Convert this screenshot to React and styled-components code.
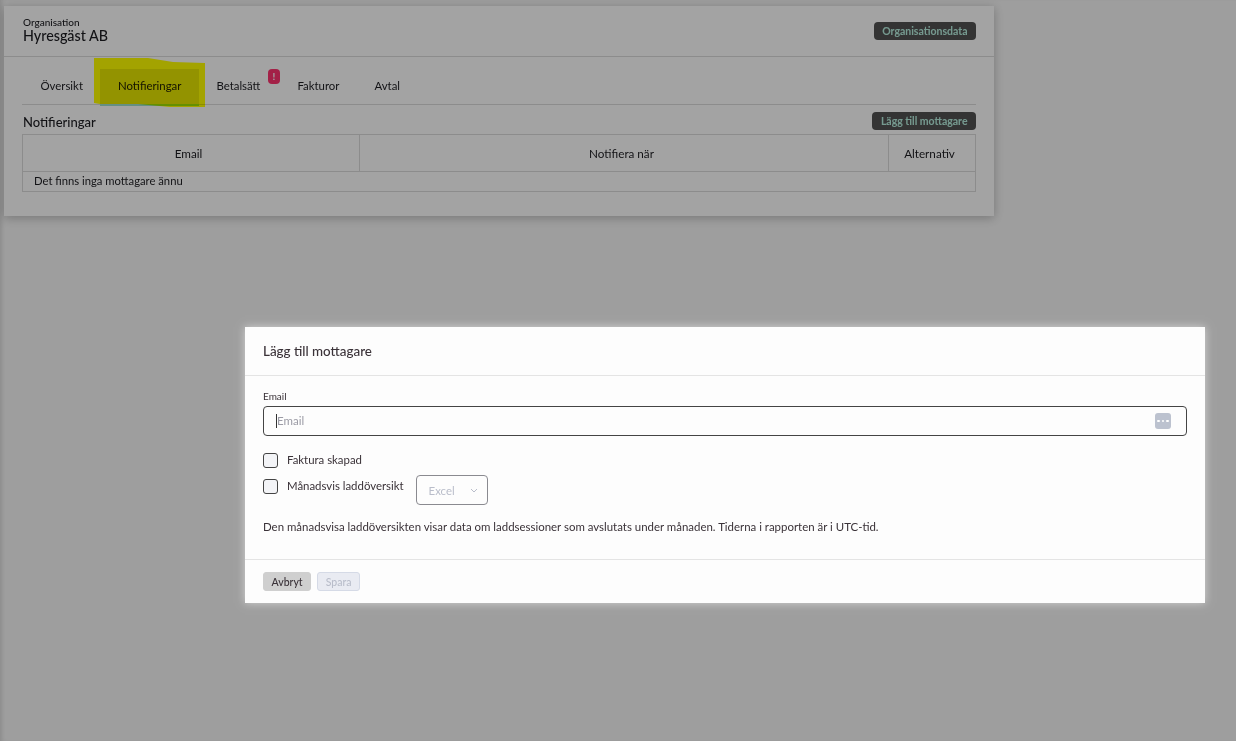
import React from "react";
import styled, { createGlobalStyle } from "styled-components";

const GlobalStyle = createGlobalStyle`
  html, body {
    margin: 0;
    height: 100%;
    background: #f8f8f8;
    font-family: "Lato", "Noto Sans", sans-serif;
    color: #1d1d22;
    overflow: hidden;
  }
`;

const Page = styled.div`
  height: 741px;
  padding: 6px 0 0 4px;
  box-sizing: border-box;
  box-shadow: inset 4px 0 4px -2px rgba(0, 0, 0, 0.12);
`;

const Card = styled.section`
  width: 990px;
  height: 210px;
  background: #fff;
  box-shadow: 0 2px 10px rgba(0, 0, 0, 0.25);
`;

const CardHeader = styled.header`
  height: 50px;
  padding: 0 18px;
  display: flex;
  align-items: center;
  justify-content: space-between;
  border-bottom: 1px solid #dcdcdc;
`;

const OrgName = styled.div`
  margin: -3px 0 0 1px;
  font-size: 14.3px;
  font-weight: 500;
  line-height: 15px;
  small {
    display: block;
    font-size: 10px;
    line-height: 11px;
  }
`;

const DarkButton = styled.button`
  height: 18px;
  padding: 0 8.5px;
  border: 0;
  border-radius: 4px;
  background: #525252;
  color: #b8f0e0;
  font: 700 10.5px "Lato", sans-serif;
`;

const Body = styled.div`
  padding: 0 18px;
`;

const Tabs = styled.nav`
  height: 48px;
  padding-left: 1px;
  box-sizing: border-box;
  display: flex;
  align-items: flex-end;
  border-bottom: 1px solid #dcdcdc;
`;

const Tab = styled.a`
  position: relative;
  height: 37px;
  padding: 0 ${(p) => (p.$badged ? "19.5px" : "17.5px")} 2px 17.5px;
  box-sizing: border-box;
  display: flex;
  align-items: center;
  font-size: 11.4px;
  background: ${(p) => (p.$active ? "#e6e6e6" : "transparent")};
  border-bottom: 2px solid ${(p) => (p.$active ? "#9fe0cc" : "transparent")};
  margin-bottom: -2px;
`;

const Alert = styled.span`
  position: absolute;
  top: 0;
  right: 0;
  width: 12px;
  height: 15px;
  border-radius: 4px;
  background: #ff3470;
  color: #fff;
  font-size: 10px;
  font-weight: 700;
  line-height: 15px;
  text-align: center;
`;

const TitleRow = styled.div`
  height: 29px;
  box-sizing: border-box;
  padding-top: 3px;
  display: flex;
  align-items: center;
  justify-content: space-between;
`;

const SectionTitle = styled.h3`
  margin: 2px 0 0 1px;
  font-size: 13px;
  font-weight: 500;
`;

const Table = styled.div`
  border: 1px solid #dcdcdc;
  font-size: 11.7px;
`;

const HeadRow = styled.div`
  height: 37px;
  box-sizing: border-box;
  display: grid;
  grid-template-columns: 336px 529px 1fr;
  border-bottom: 1px solid #dcdcdc;
`;

const HeadCell = styled.div`
  display: flex;
  align-items: center;
  justify-content: center;
  padding-right: 5px;
  & + & {
    border-left: 1px solid #dcdcdc;
  }
`;

const EmptyRow = styled.div`
  height: 19px;
  line-height: 18px;
  padding-left: 11px;
  font-size: 11.25px;
`;

const Highlight = styled.svg`
  position: absolute;
  left: 0;
  top: 0;
  mix-blend-mode: multiply;
`;

const Backdrop = styled.div`
  position: fixed;
  inset: 0;
  background: rgba(0, 0, 0, 0.36);
  display: flex;
  align-items: flex-start;
  padding: 327px 0 0 245px;
  box-sizing: border-box;
`;

const Modal = styled.div`
  width: 960px;
  height: 276px;
  background: #fdfdfd;
  box-shadow: 0 0 8px rgba(255, 255, 255, 0.55);
  display: flex;
  flex-direction: column;
`;

const ModalHeader = styled.h2`
  margin: 0;
  height: 49px;
  box-sizing: border-box;
  padding: 0 18px;
  display: flex;
  align-items: center;
  font-size: 13.4px;
  font-weight: 500;
  color: #3a3238;
  border-bottom: 1px solid #e4e4e4;
`;

const ModalBody = styled.div`
  flex: 1;
  padding: 14px 18px 0;
  color: #3a3238;
`;

const Label = styled.label`
  display: block;
  font-size: 10px;
  line-height: 12px;
  margin-bottom: 4px;
`;

const InputWrap = styled.div`
  height: 30px;
  box-sizing: border-box;
  border: 1px solid #444;
  border-radius: 4px;
  padding: 0 15px 0 12px;
  display: flex;
  align-items: center;
  justify-content: space-between;
  font-size: 11.5px;
  color: #9b9ba5;
  margin-bottom: 17px;
`;

const Caret = styled.span`
  border-left: 1px solid #333;
  line-height: 14px;
`;

const DotsButton = styled.span`
  width: 16px;
  height: 16px;
  border-radius: 3px;
  background: #bcc2cf;
  display: flex;
  align-items: center;
  justify-content: center;
  gap: 2px;
  i {
    width: 2.5px;
    height: 2.5px;
    background: #fff;
    border-radius: 50%;
  }
`;

const CheckRow = styled.div`
  display: flex;
  align-items: flex-start;
  gap: 9px;
  font-size: 11.4px;
  line-height: 13px;
  min-height: 15px;
  margin-bottom: ${(p) => p.$gap}px;
`;

const Box = styled.span`
  width: 15px;
  height: 15px;
  box-sizing: border-box;
  border: 1px solid #444;
  border-radius: 3px;
  background: #f3f4f7;
  flex: none;
`;

const Select = styled.span`
  width: 72px;
  height: 30px;
  box-sizing: border-box;
  border: 1px solid #8a8a90;
  border-radius: 4px;
  margin: -4px 0 0 3px;
  padding: 0 9px 0 12px;
  display: flex;
  align-items: center;
  justify-content: space-between;
  color: #b9bdca;
`;

const Note = styled.p`
  margin: 0;
  font-size: 11.45px;
  line-height: 15px;
`;

const ModalFooter = styled.footer`
  height: 44px;
  box-sizing: border-box;
  padding: 12px 18px 0;
  border-top: 1px solid #e4e4e4;
  display: flex;
  gap: 6px;
`;

const FooterButton = styled.button`
  height: 19px;
  padding: 0 7.5px;
  border-radius: 3px;
  border: 1px solid ${(p) => (p.$disabled ? "#d5dae6" : "#cfcfcf")};
  background: ${(p) => (p.$disabled ? "#e9ebf2" : "#cfcfcf")};
  color: ${(p) => (p.$disabled ? "#b9bdca" : "#3a3238")};
  font: 500 10.5px "Lato", sans-serif;
`;

export default function App() {
  return (
    <>
      <GlobalStyle />
      <Page>
        <Card>
          <CardHeader>
            <OrgName>
              <small>Organisation</small>
              Hyresgäst AB
            </OrgName>
            <DarkButton>Organisationsdata</DarkButton>
          </CardHeader>
          <Body>
            <Tabs>
              <Tab>Översikt</Tab>
              <Tab $active>Notifieringar</Tab>
              <Tab $badged>
                Betalsätt
                <Alert>!</Alert>
              </Tab>
              <Tab>Fakturor</Tab>
              <Tab>Avtal</Tab>
            </Tabs>
            <TitleRow>
              <SectionTitle>Notifieringar</SectionTitle>
              <DarkButton>Lägg till mottagare</DarkButton>
            </TitleRow>
            <Table>
              <HeadRow>
                <HeadCell>Email</HeadCell>
                <HeadCell>Notifiera när</HeadCell>
                <HeadCell>Alternativ</HeadCell>
              </HeadRow>
              <EmptyRow>Det finns inga mottagare ännu</EmptyRow>
            </Table>
          </Body>
        </Card>
      </Page>
      <Highlight width="210" height="110">
        <polygon points="94,58 148,58 173,62 205,63 205,107 170,107 138,104 100,104 94,103" fill="#ffff00" />
      </Highlight>
      <Backdrop>
        <Modal>
          <ModalHeader>Lägg till mottagare</ModalHeader>
          <ModalBody>
            <Label>Email</Label>
            <InputWrap>
              <Caret>Email</Caret>
              <DotsButton>
                <i />
                <i />
                <i />
              </DotsButton>
            </InputWrap>
            <CheckRow $gap={11}>
              <Box />
              Faktura skapad
            </CheckRow>
            <CheckRow $gap={14}>
              <Box />
              Månadsvis laddöversikt
              <Select>
                Excel
                <svg width="8" height="5" viewBox="0 0 8 5" fill="none" stroke="#b9bdca">
                  <path d="M1 1l3 3 3-3" />
                </svg>
              </Select>
            </CheckRow>
            <Note>
              Den månadsvisa laddöversikten visar data om laddsessioner som avslutats under månaden. Tiderna i rapporten är i UTC-tid.
            </Note>
          </ModalBody>
          <ModalFooter>
            <FooterButton>Avbryt</FooterButton>
            <FooterButton $disabled>Spara</FooterButton>
          </ModalFooter>
        </Modal>
      </Backdrop>
    </>
  );
}
